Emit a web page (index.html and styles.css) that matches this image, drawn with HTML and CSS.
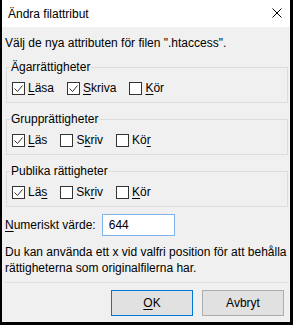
FILE: index.html
```html
<!DOCTYPE html>
<html lang="sv">
<head>
  <meta charset="UTF-8">
  <title>Ändra filattribut</title>
  <link rel="stylesheet" href="styles.css">
</head>
<body>

  <div class="window">
    <div class="titlebar">
      <span class="title">Ändra filattribut</span>
      <svg class="close" width="10" height="10" viewBox="0 0 10 10">
        <path d="M0.5 0.5 L9.5 9.5 M9.5 0.5 L0.5 9.5" stroke="#000" stroke-width="1"/>
      </svg>
    </div>

    <div class="content">
      <p class="intro">Välj de nya attributen för filen ".htaccess".</p>

      <fieldset class="group">
        <legend>Ägarrättigheter</legend>
        <div class="row">
          <label class="check"><span class="box"><svg viewBox="0 0 11 11"><path d="M1.5 5.5 L4.5 8.5 L9.5 2.5"/></svg></span><span><u>L</u>äsa</span></label>
          <label class="check"><span class="box"><svg viewBox="0 0 11 11"><path d="M1.5 5.5 L4.5 8.5 L9.5 2.5"/></svg></span><span><u>S</u>kriva</span></label>
          <label class="check"><span class="box"></span><span><u>K</u>ör</span></label>
        </div>
      </fieldset>

      <fieldset class="group">
        <legend>Grupprättigheter</legend>
        <div class="row">
          <label class="check"><span class="box"><svg viewBox="0 0 11 11"><path d="M1.5 5.5 L4.5 8.5 L9.5 2.5"/></svg></span><span><u>L</u>äs</span></label>
          <label class="check"><span class="box"></span><span>S<u>k</u>riv</span></label>
          <label class="check"><span class="box"></span><span>Kö<u>r</u></span></label>
        </div>
      </fieldset>

      <fieldset class="group">
        <legend>Publika rättigheter</legend>
        <div class="row">
          <label class="check"><span class="box"><svg viewBox="0 0 11 11"><path d="M1.5 5.5 L4.5 8.5 L9.5 2.5"/></svg></span><span>Lä<u>s</u></span></label>
          <label class="check"><span class="box"></span><span>Sk<u>r</u>iv</span></label>
          <label class="check"><span class="box"></span><span><u>K</u>ör</span></label>
        </div>
      </fieldset>

      <div class="numeric">
        <span><u>N</u>umeriskt värde:</span>
        <div class="input">644</div>
      </div>

      <p class="note">Du kan använda ett x vid valfri position för att behålla<br>rättigheterna som originalfilerna har.</p>
    </div>

    <div class="buttons">
      <button class="btn default"><u>O</u>K</button>
      <button class="btn">Avbryt</button>
    </div>
  </div>

</body>
</html>
```

FILE: styles.css
```css
body {
  margin: 0;
  background: #000;
  font-family: 'Liberation Sans', Arial, sans-serif;
  font-size: 12px;
  color: #000;
}

.window {
  width: 288px;
  height: 322px;
  margin-left: 2px;
  background: #f0f0f0;
  display: flex;
  flex-direction: column;
}

/* Title bar */
.titlebar {
  height: 27px;
  flex-shrink: 0;
  background: #fff;
  display: flex;
  align-items: center;
  justify-content: space-between;
  padding: 0 8px 0 6px;
}

.close {
  margin-top: -1px;
}

/* Content */
.content {
  padding: 0 0 0 3px;
}

.intro {
  margin: 8px 0 8px 0;
  line-height: 16px;
}

.group {
  margin: 0 2px 0 1px;
  padding: 0 3px 6px 3px;
  border: 1px solid #dcdcdc;
}

.group + .group {
  margin-top: 8px;
}

.group legend {
  padding: 0 1px;
  line-height: 16px;
}

.row {
  display: flex;
  gap: 13px;
  padding-left: 2px;
  margin-top: 5px;
}

.check {
  display: flex;
  align-items: center;
  gap: 3px;
  line-height: 16px;
}

.box {
  width: 11px;
  height: 11px;
  border: 1px solid #333;
  background: #fff;
  display: flex;
}

.box svg {
  width: 11px;
  height: 11px;
  fill: none;
  stroke: #333;
  stroke-width: 1;
}

u {
  text-decoration-thickness: 1px;
  text-underline-offset: 2px;
}

.numeric {
  display: flex;
  align-items: center;
  gap: 6px;
  margin-top: 7px;
}

.input {
  width: 65px;
  height: 20px;
  line-height: 20px;
  border: 1px solid #7eb4ea;
  background: #fff;
  padding-left: 6px;
}

.note {
  margin: 8px 0 0 0;
  line-height: 16px;
  white-space: nowrap;
}

/* Buttons */
.buttons {
  margin: 6px 1px 0 3px;
  border-top: 1px solid #dfdfdf;
  padding-top: 7px;
  display: flex;
  justify-content: flex-end;
  gap: 9px;
  padding-right: 5px;
}

.btn {
  width: 82px;
  height: 26px;
  font-family: inherit;
  font-size: 12px;
  color: #000;
  background: #e1e1e1;
  border: 1px solid #adadad;
  padding: 0;
}

.btn.default {
  border: 1px solid #0078d7;
}
```
